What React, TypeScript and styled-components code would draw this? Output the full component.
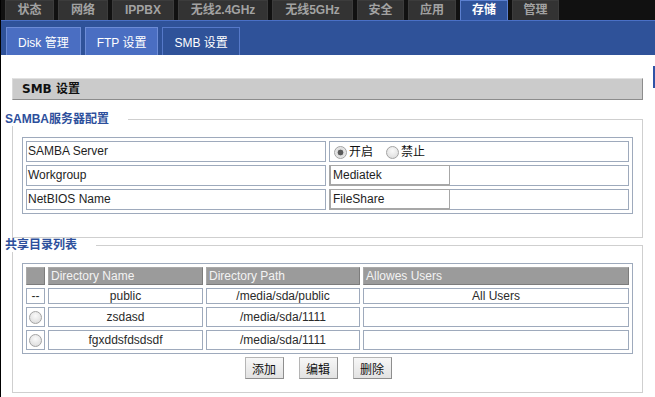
import React from 'react';
import styled, { createGlobalStyle } from 'styled-components';

const GlobalStyle = createGlobalStyle`
  html, body {
    margin: 0;
    padding: 0;
    background: #fff;
  }
  body {
    font-family: "Liberation Sans", "Noto Sans CJK SC", sans-serif;
    font-size: 12px;
    color: #222;
  }
`;

const Page = styled.div`
  position: relative;
  width: 654px;
  height: 397px;
  border-left: 1px solid #000;
  overflow: hidden;
  background: #fff;
`;

const TopNav = styled.nav`
  display: flex;
  gap: 4px;
  height: 20px;
  padding-left: 4px;
  background: #111;
`;

const NavTab = styled.div<{ $active?: boolean; $w: number }>`
  box-sizing: border-box;
  width: ${p => p.$w}px;
  height: 20px;
  line-height: 19px;
  text-align: center;
  font-weight: bold;
  font-size: 12px;
  color: ${p => (p.$active ? '#fff' : '#a2a2a2')};
  background: ${p => (p.$active ? '#2f5299' : '#333')};
  border: 1px solid ${p => (p.$active ? '#5b7fcf' : '#3c3c3c')};
  border-bottom: none;
`;

const SubBar = styled.div`
  box-sizing: border-box;
  display: flex;
  align-items: flex-end;
  gap: 4px;
  height: 35px;
  padding-left: 5px;
  background: #2f5299;
  border-top: 1px solid #4a70c6;
`;

const SubTab = styled.div<{ $active?: boolean }>`
  box-sizing: border-box;
  height: 28px;
  padding: 2px 11px 0;
  line-height: 26px;
  font-size: 12px;
  color: #fff;
  background: ${p => (p.$active ? '#2f5299' : '#4a6ec2')};
  border: 1px solid ${p => (p.$active ? '#5679c9' : '#6d8cd6')};
  border-bottom: none;
`;

const ScrollThumb = styled.div`
  position: absolute;
  right: 0;
  top: 66px;
  width: 2px;
  height: 22px;
  background: #2f53a6;
`;

const Content = styled.main`
  padding: 23px 12px 0 11px;
`;

const SectionTitle = styled.h2`
  box-sizing: border-box;
  margin: 0;
  height: 22px;
  padding-left: 9px;
  line-height: 20px;
  font-family: "DejaVu Sans", "Noto Sans CJK SC", sans-serif;
  font-size: 12px;
  font-weight: bold;
  color: #111;
  background: #cbcbcb;
  border-top: 1px solid #e2e2e2;
  border-left: 1px solid #dadada;
  border-bottom: 1px solid #8c8c8c;
  border-right: 1px solid #8c8c8c;
`;

const Group = styled.fieldset<{ $mt: number; $pb: number }>`
  min-width: 0;
  margin: ${p => p.$mt}px 0 0;
  padding: 11px 9px ${p => p.$pb}px;
  border: 1px solid #cfcfcf;
`;

const Legend = styled.legend`
  margin-left: -17px;
  padding: 0 19px 0 0;
  line-height: 14px;
  font-size: 12px;
  font-weight: bold;
  color: #2d4f9c;
`;

const GridTable = styled.table`
  width: 100%;
  table-layout: fixed;
  border: 1px solid #9eaabc;
  border-spacing: 3px;
`;

const LabelCell = styled.td`
  box-sizing: border-box;
  height: 21px;
  padding: 0 1px;
  border: 1px solid #9eaabc;
  line-height: 19px;
  color: #1e1e1e;
`;

const ValueCell = styled.td`
  box-sizing: border-box;
  height: 21px;
  padding: 0;
  border: 1px solid #9eaabc;
  line-height: 19px;
`;

const TextInput = styled.input`
  display: block;
  box-sizing: border-box;
  width: 121px;
  height: 21px;
  margin: -1px;
  padding: 0 2px;
  border: 2px solid #a7a7a7;
  border-top-width: 1px;
  border-right-width: 1px;
  background: #fff;
  font: 12px "Liberation Sans", sans-serif;
  color: #1e1e1e;
  outline: none;
`;

const RadioGroup = styled.div`
  display: flex;
  align-items: center;
  gap: 13px;
  padding-left: 4px;
  height: 19px;
`;

const RadioLabel = styled.label`
  display: inline-flex;
  align-items: center;
  gap: 2px;
  padding-top: 2px;
  font-size: 12px;
  color: #111;
`;

const Radio = styled.span<{ $checked?: boolean }>`
  display: inline-block;
  box-sizing: border-box;
  width: 13px;
  height: 13px;
  border-radius: 50%;
  border: 1px solid #a3a3a3;
  vertical-align: middle;
  background: ${p =>
    p.$checked
      ? 'radial-gradient(circle, #5a5a5a 0 2.6px, #dcdcdc 3.2px, #f4f4f4 100%)'
      : 'radial-gradient(circle at 50% 35%, #fafafa 0, #e2e2e2 70%, #d0d0d0 100%)'};
`;

const HeadCell = styled.th<{ $w?: number }>`
  box-sizing: border-box;
  width: ${p => (p.$w ? `${p.$w}px` : 'auto')};
  height: 18px;
  padding: 0 2px;
  line-height: 16px;
  text-align: left;
  font-weight: normal;
  font-size: 12px;
  color: #f3f3f3;
  background: #9b9b9b;
  border: 1px solid #a9a9a9;
  border-right-color: #7c7c7c;
  border-bottom-color: #7c7c7c;
`;

const DataCell = styled.td<{ $tall?: boolean }>`
  box-sizing: border-box;
  height: ${p => (p.$tall ? 20 : 16)}px;
  padding: 0;
  line-height: 14px;
  text-align: center;
  color: #2a2a2a;
  border: 1px solid #9eaabc;
`;

const ButtonRow = styled.div`
  display: flex;
  justify-content: center;
  margin-top: 3px;
  padding-right: 4px;
`;

const Button = styled.button`
  box-sizing: border-box;
  width: 39px;
  height: 22px;
  margin-right: 15px;
  padding: 0;
  font: 12px "Liberation Sans", "Noto Sans CJK SC", sans-serif;
  color: #111;
  background: linear-gradient(#f7f7f7, #e2e2e2);
  border: 1px solid #8e8e8e;
  border-top-color: #b5b5b5;
  border-left-color: #b5b5b5;
  border-radius: 0;
`;

const navTabs = [
  { label: '状态', w: 49 },
  { label: '网络', w: 50 },
  { label: 'IPPBX', w: 62 },
  { label: '无线2.4GHz', w: 90 },
  { label: '无线5GHz', w: 81 },
  { label: '安全', w: 47 },
  { label: '应用', w: 48 },
  { label: '存储', w: 48, active: true },
  { label: '管理', w: 47 },
];

const subTabs = [
  { label: 'Disk 管理' },
  { label: 'FTP 设置' },
  { label: 'SMB 设置', active: true },
];

const shares = [
  { name: 'public', path: '/media/sda/public', users: 'All Users', fixed: true },
  { name: 'zsdasd', path: '/media/sda/1111', users: '' },
  { name: 'fgxddsfdsdsdf', path: '/media/sda/1111', users: '' },
];

export default function App() {
  return (
    <>
      <GlobalStyle />
      <Page>
        <TopNav>
          {navTabs.map(t => (
            <NavTab key={t.label} $w={t.w} $active={t.active}>
              {t.label}
            </NavTab>
          ))}
        </TopNav>
        <SubBar>
          {subTabs.map(t => (
            <SubTab key={t.label} $active={t.active}>
              {t.label}
            </SubTab>
          ))}
        </SubBar>
        <ScrollThumb />

        <Content>
          <SectionTitle>SMB 设置</SectionTitle>

          <Group $mt={12} $pb={23}>
            <Legend>SAMBA服务器配置</Legend>
            <GridTable>
              <tbody>
                <tr>
                  <LabelCell>SAMBA Server</LabelCell>
                  <ValueCell>
                    <RadioGroup>
                      <RadioLabel>
                        <Radio $checked />
                        开启
                      </RadioLabel>
                      <RadioLabel>
                        <Radio />
                        禁止
                      </RadioLabel>
                    </RadioGroup>
                  </ValueCell>
                </tr>
                <tr>
                  <LabelCell>Workgroup</LabelCell>
                  <ValueCell>
                    <TextInput defaultValue="Mediatek" />
                  </ValueCell>
                </tr>
                <tr>
                  <LabelCell>NetBIOS Name</LabelCell>
                  <ValueCell>
                    <TextInput defaultValue="FileShare" />
                  </ValueCell>
                </tr>
              </tbody>
            </GridTable>
          </Group>

          <Group $mt={0} $pb={13}>
            <Legend>共享目录列表</Legend>
            <GridTable>
              <thead>
                <tr>
                  <HeadCell $w={19} />
                  <HeadCell $w={155}>Directory Name</HeadCell>
                  <HeadCell $w={154}>Directory Path</HeadCell>
                  <HeadCell>Allowes Users</HeadCell>
                </tr>
              </thead>
              <tbody>
                {shares.map(s => (
                  <tr key={s.name}>
                    <DataCell $tall={!s.fixed}>{s.fixed ? '--' : <Radio />}</DataCell>
                    <DataCell $tall={!s.fixed}>{s.name}</DataCell>
                    <DataCell $tall={!s.fixed}>{s.path}</DataCell>
                    <DataCell $tall={!s.fixed}>{s.users}</DataCell>
                  </tr>
                ))}
              </tbody>
            </GridTable>
            <ButtonRow>
              <Button>添加</Button>
              <Button>编辑</Button>
              <Button>删除</Button>
            </ButtonRow>
          </Group>
        </Content>
      </Page>
    </>
  );
}
